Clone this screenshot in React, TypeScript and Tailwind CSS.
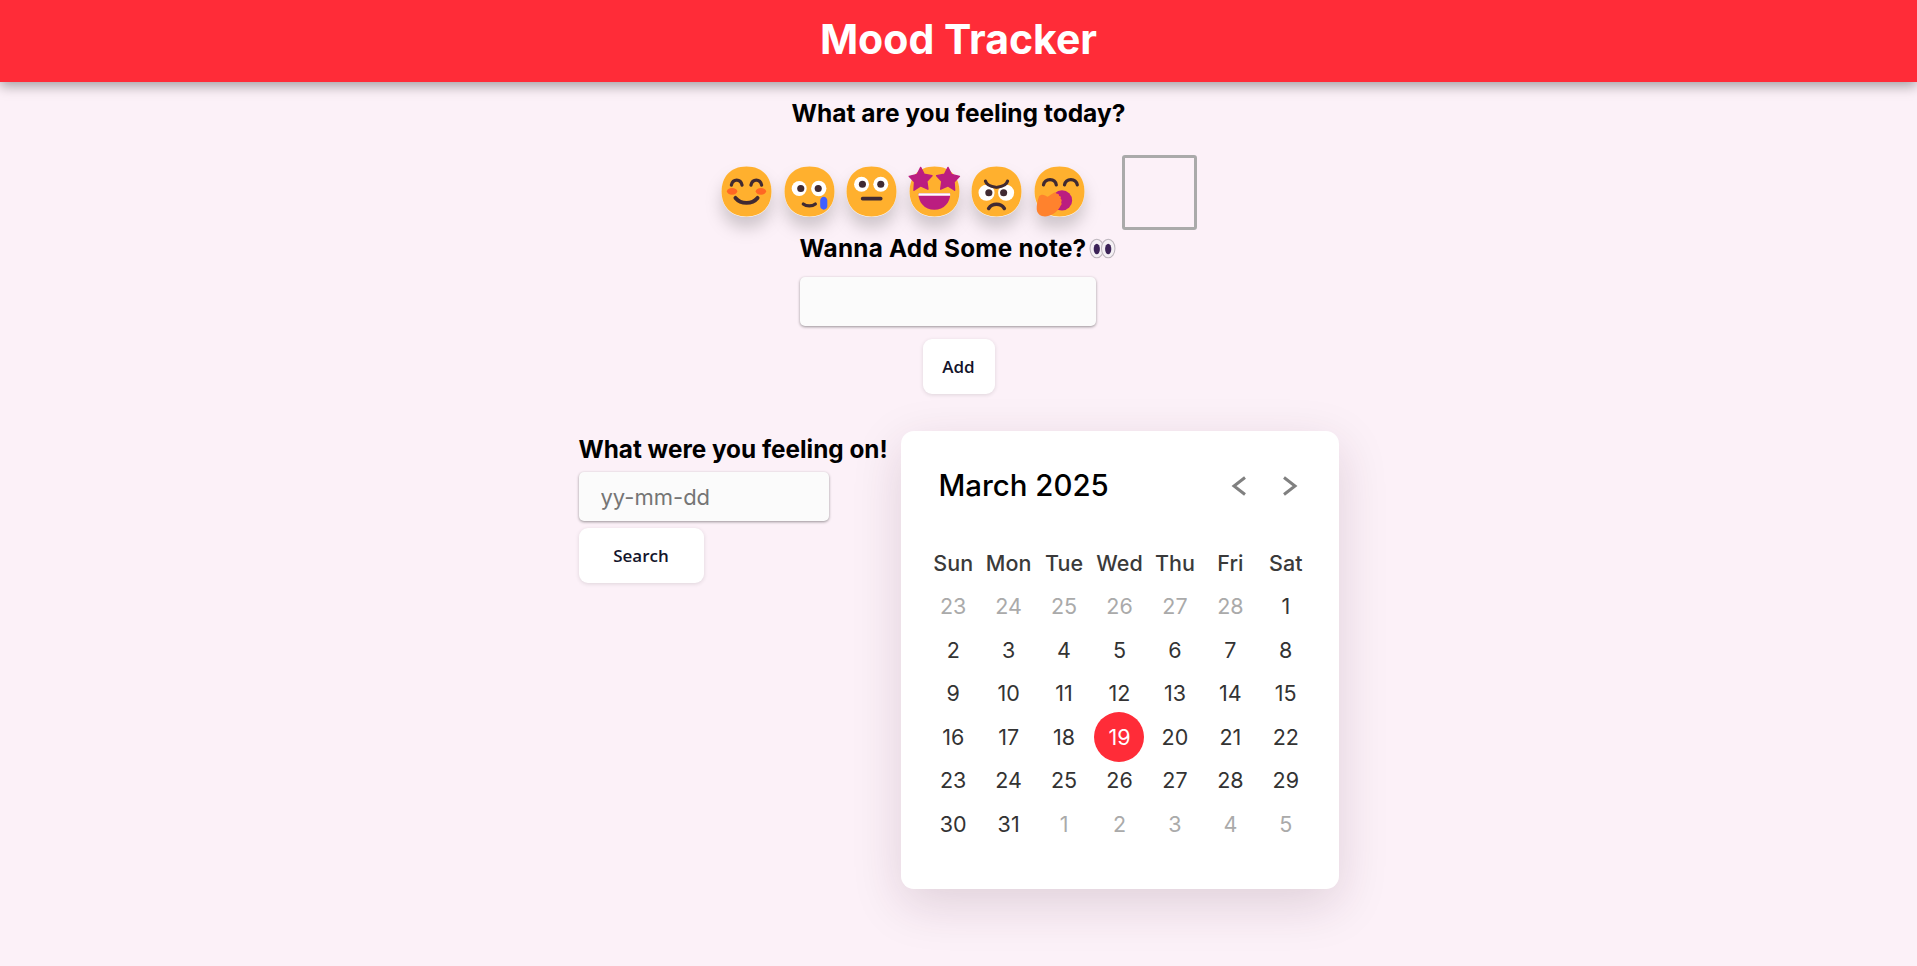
const INK = "#402A32";
const FACE = "M15.999 29.998C25.333 29.998 29.998 23.73 29.998 15.999 29.998 8.268 25.333 2 15.999 2 6.665 2 2 8.268 2 15.999 2 23.73 6.664 29.998 15.999 29.998Z";

function Face({ children }: { children: React.ReactNode }) {
  return (
    <svg viewBox="0 0 32 32" className="h-[57px] w-[57px] shrink-0 overflow-visible drop-shadow-[0_11px_8px_rgba(0,0,0,0.18)]" aria-hidden>
      <path d={FACE} fill="#fff" transform="translate(0 0.22)" />
      <path d={FACE} fill="#FFB02E" />
      {children}
    </svg>
  );
}

const Star = ({ d }: { d: string }) => <path d={d} fill="#BB1D80" stroke="#BB1D80" strokeWidth="0.8" strokeLinejoin="round" />;

const EMOJIS = [
  <Face key="smile">
    <ellipse cx="7.9" cy="15.9" rx="2.9" ry="1.9" fill="#FF6723" />
    <ellipse cx="24.1" cy="15.9" rx="2.9" ry="1.9" fill="#FF6723" />
    <g fill="none" stroke={INK} strokeWidth="1.8" strokeLinecap="round">
      <path d="M7.5 12.4c.4-1.8 1.6-2.8 3-2.8s2.6 1 3 2.8" />
      <path d="M18.5 12.4c.4-1.8 1.6-2.8 3-2.8s2.6 1 3 2.8" />
      <path d="M9.8 19.6c1.5 1.8 3.7 2.8 6.2 2.8s4.7-1 6.2-2.8" strokeWidth="2.2" />
    </g>
  </Face>,
  <Face key="tear">
    <circle cx="10.2" cy="14.3" r="4.2" fill="#fff" />
    <circle cx="21.2" cy="14.3" r="4.3" fill="#fff" />
    <circle cx="11.1" cy="14.3" r="2" fill={INK} />
    <circle cx="20.9" cy="14.3" r="2" fill={INK} />
    <path d="M12.5 23c1.8 1.5 5 1.5 6.8 0" fill="none" stroke={INK} strokeWidth="1.8" strokeLinecap="round" />
    <path d="M24 19c1.2 0 2 1 2 2.2v3c0 1.2-.9 2-2 2s-2-.8-2-2v-3c0-1.2.8-2.2 2-2.2Z" fill="#3F5FFF" />
  </Face>,
  <Face key="flat">
    <circle cx="10.4" cy="11.9" r="4.2" fill="#fff" />
    <circle cx="21.2" cy="11.9" r="4.2" fill="#fff" />
    <circle cx="10.9" cy="11.9" r="2" fill={INK} />
    <circle cx="21.2" cy="11.9" r="2" fill={INK} />
    <rect x="10" y="19" width="12.2" height="2" rx="1" fill={INK} />
  </Face>,
  <Face key="stars">
    <path d="M7 17h17.8c.2 5-3.4 9.3-8.9 9.3S6.8 22 7 17Z" fill="#BB1D80" />
    <path d="M7.3 17h17.2c.3 0 .4.3.3 1.4H7c-.1-1 0-1.4.3-1.4Z" fill="#fff" />
    <Star d="M8.2 2.5l2 3.8 4.4.8-2.9 3.2.6 4.4-4.1-1.9-3.7 2.5.3-4.7L1.8 7.5l4.5-1.1Z" />
    <Star d="M23.6 2.5l1.9 3.9 4.5 1.1-3 3.1.3 4.7-3.7-2.5-4.1 1.9.6-4.4-2.9-3.2 4.4-.8Z" />
  </Face>,
  <Face key="angry">
    <circle cx="10.4" cy="16.7" r="4.5" fill="#fff" />
    <circle cx="21.4" cy="16.7" r="4.5" fill="#fff" />
    <circle cx="11.7" cy="16.7" r="2" fill={INK} />
    <circle cx="20" cy="16.7" r="2" fill={INK} />
    <g fill="none" stroke={INK} strokeWidth="1.8" strokeLinecap="round">
      <path d="M9.8 10.2c.4 1.5 2.6 3 5.8 3.4" />
      <path d="M22.2 10.2c-.4 1.5-2.6 3-5.8 3.4" />
      <path d="M11.6 25.5c1-1.5 2.6-2.3 4.4-2.3s3.4.8 4.4 2.3" strokeWidth="2" />
    </g>
  </Face>,
  <Face key="yawn">
    <g fill="none" stroke={INK} strokeWidth="1.8" strokeLinecap="round">
      <path d="M7 12.3c.4-1.8 1.9-3 3.700-3s3.200 1.200 3.500 3" />
      <path d="M18.800 12.300c.4-1.800 1.800-3 3.600-3s3.200 1.200 3.600 3" />
    </g>
    <circle cx="17.400" cy="21" r="5.700" fill="#BB1D80" />
    <path
      d="M5.600 18c1.200-.5 2.800.5 3.800 1 1.100-.8 2.500-1.800 3.700-2.400.8-.3 1.300.1 1.300.8 1-.3 1.500.3 1.300 1.200 1-.1 1.300.7.900 1.500.8.400.8 1.200.3 1.900.4.600.4 1.300-.2 1.900-.9 1.900-2.300 3.600-4.300 4.800-2.200 1.300-4.500 1.700-6.300 1.100-1.800-.6-2.800-2.100-2.900-3.800-.1-2.400.6-5.500 1.400-7.500Z"
      fill="#FF822D"
    />
  </Face>,
];

const WEEK = ["Sun", "Mon", "Tue", "Wed", "Thu", "Fri", "Sat"];
const DAYS = [
  ...[23, 24, 25, 26, 27, 28].map((d) => ({ d, muted: true })),
  ...Array.from({ length: 31 }, (_, i) => ({ d: i + 1, muted: false })),
  ...[1, 2, 3, 4, 5].map((d) => ({ d, muted: true })),
];

function Chevron({ left }: { left?: boolean }) {
  return (
    <svg viewBox="0 0 16 20" className="h-[20px] w-[16px]" fill="none" stroke="#808080" strokeWidth="3" aria-hidden>
      <path d={left ? "M14 1.5 3 10l11 8.5" : "M2 1.5 13 10 2 18.5"} />
    </svg>
  );
}

function Calendar() {
  return (
    <div className="h-[458px] w-[438px] shrink-0 rounded-[13px] bg-white px-[25px] pt-[31px] shadow-[0_15px_50px_rgba(60,20,50,0.15)]">
      <div className="flex h-[48px] items-center justify-between pl-[13px] pr-[16px]">
        <span className="text-[29.4px] font-medium text-black">March 2025</span>
        <div className="flex items-center gap-[35px]">
          <Chevron left />
          <Chevron />
        </div>
      </div>
      <div className="mt-[31px] grid grid-cols-7">
        {WEEK.map((w) => (
          <div key={w} className="flex h-[43.5px] items-center justify-center text-[21.5px] font-medium text-[#3a3a3a]">
            {w}
          </div>
        ))}
        {DAYS.map(({ d, muted }, i) => (
          <div key={i} className="flex h-[43.5px] items-center justify-center text-[21.5px]">
            {d === 19 && !muted ? (
              <span className="flex h-[50px] w-[50px] shrink-0 items-center justify-center rounded-full bg-[#ff2c38] text-white">{d}</span>
            ) : (
              <span className={muted ? "text-[#aaa]" : "text-[#333]"}>{d}</span>
            )}
          </div>
        ))}
      </div>
    </div>
  );
}

export default function App() {
  return (
    <div className="min-h-[966px] bg-[#fcf1f8] font-['Inter',sans-serif] text-black">
      <header className="flex h-[82px] items-center justify-center bg-[#ff2c38] shadow-[0_4px_12px_rgba(0,0,0,0.35)]">
        <h1 className="mb-[2px] text-[41px] font-bold text-white">Mood Tracker</h1>
      </header>
      <main className="flex flex-col items-center">
        <h2 className="mt-[15px] h-[32px] text-[24.5px] font-bold leading-[32px]">What are you feeling today?</h2>
        <div className="mt-[26px] flex items-center pr-[2px]">
          <div className="mb-[2px] flex gap-[5.5px]">{EMOJIS}</div>
          <div className="ml-[34px] h-[75px] w-[75px] rounded-[3px] border-[3px] border-[#aaa]" />
        </div>
        <div className="flex w-[318px] flex-col items-start">
          <h2 className="mt-[2px] flex h-[32px] items-center gap-[3px] whitespace-nowrap text-[24.3px] font-bold leading-[32px] tracking-[0.25px]">
            Wanna Add Some note?
            <svg viewBox="0 0 26 20" className="h-[21px] w-[27px] shrink-0" aria-hidden>
              <ellipse cx="7.5" cy="10" rx="6.5" ry="9" fill="#F4F0F4" stroke="#bdb6bd" />
              <ellipse cx="18.5" cy="10" rx="6.5" ry="9" fill="#F4F0F4" stroke="#bdb6bd" />
              <ellipse cx="7.5" cy="10.5" rx="3" ry="5" fill="#3B2357" />
              <ellipse cx="18.5" cy="10.5" rx="3" ry="5" fill="#3B2357" />
            </svg>
          </h2>
          <input className="mt-[13px] h-[49px] w-[296px] rounded-[5px] bg-[#fbfbfb] shadow-[0_1px_3px_rgba(0,0,0,0.4)] outline-none" />
        </div>
        <button className="mt-[13px] h-[55px] w-[72px] rounded-[9px] bg-white font-['Open_Sans',sans-serif] text-[17px] font-semibold text-[#14142b] shadow-[0_1px_4px_rgba(0,0,0,0.12)]">
          Add
        </button>
        <section className="mt-[37px] flex items-start">
          <div className="flex w-[322px] flex-col items-start pt-[2px]">
            <h2 className="h-[32px] whitespace-nowrap text-[24.3px] font-bold leading-[32px]">What were you feeling on!</h2>
            <input
              placeholder="yy-mm-dd"
              className="mt-[7px] h-[49px] w-[250px] rounded-[5px] bg-[#fbfbfb] pl-[22px] text-[22px] shadow-[0_1px_3px_rgba(0,0,0,0.4)] outline-none placeholder:text-[#757575]"
            />
            <button className="mt-[7px] h-[55px] w-[125px] rounded-[9px] bg-white font-['Open_Sans',sans-serif] text-[17px] font-semibold text-[#14142b] shadow-[0_1px_4px_rgba(0,0,0,0.12)]">
              Search
            </button>
          </div>
          <Calendar />
        </section>
      </main>
    </div>
  );
}
